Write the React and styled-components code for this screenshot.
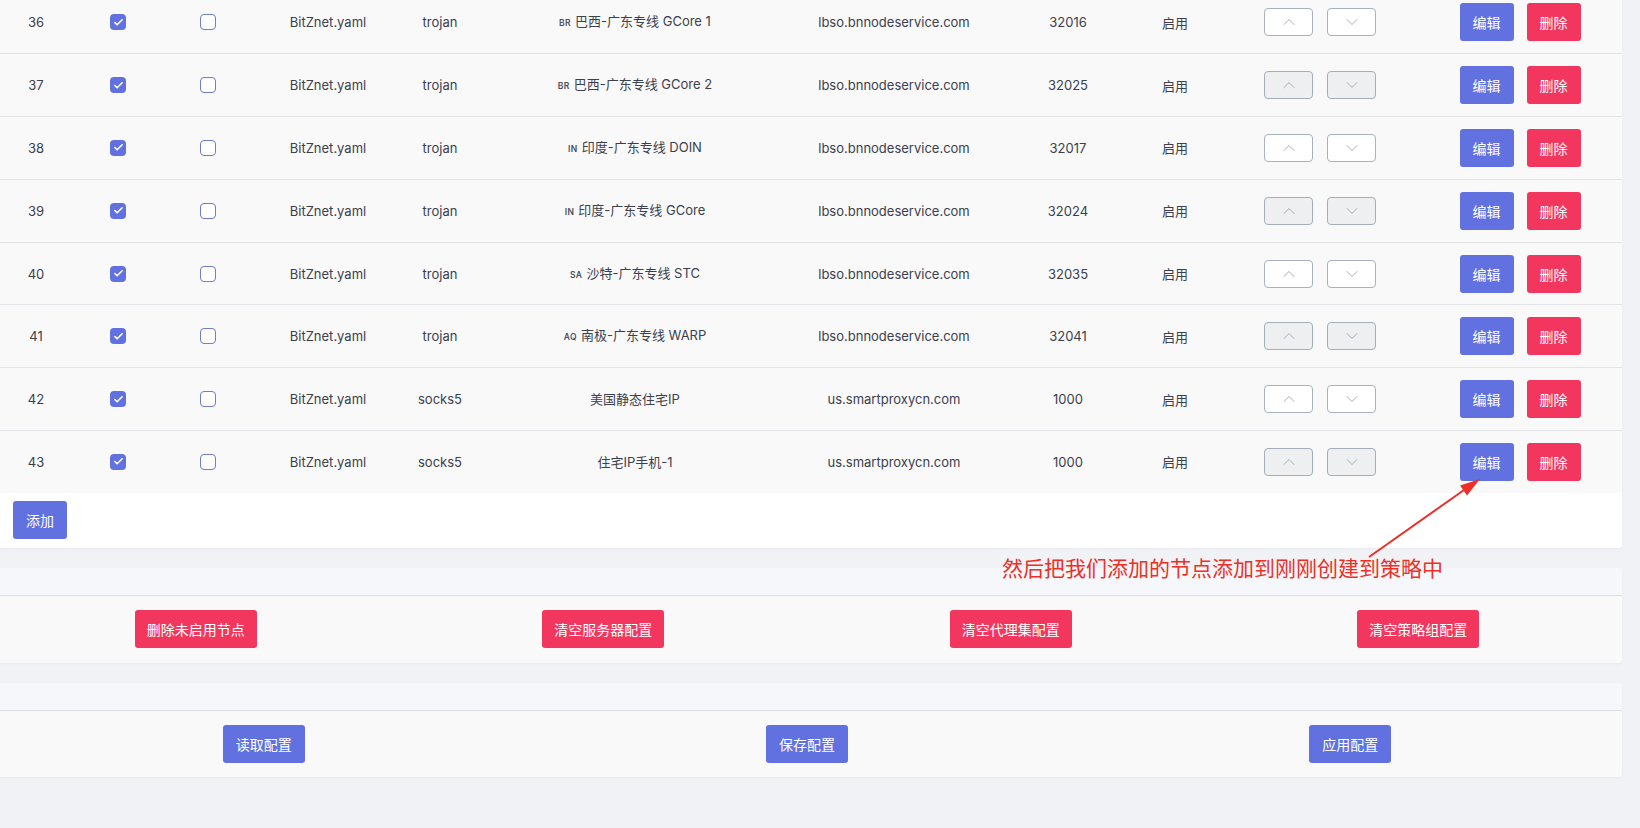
import React from "react";
import styled, { createGlobalStyle } from "styled-components";
import { ChevronUp, ChevronDown, Check } from "lucide-react";

const GlobalStyle = createGlobalStyle`
    html, body {
        margin: 0;
        padding: 0;
        background: #f1f2f5;
        overflow: hidden;
    }
    body {
        font-family: Inter, "Noto Sans CJK SC", sans-serif;
        color: #3b404c;
    }
`;

const COLUMNS = "88px 76px 104px 136px 88px 302px 216px 132px 82px 208px 198px";

const rows = [
    {id: 36, type: "trojan", flag: "BR", name: "巴西-广东专线 GCore 1", server: "lbso.bnnodeservice.com", port: 32016},
    {id: 37, type: "trojan", flag: "BR", name: "巴西-广东专线 GCore 2", server: "lbso.bnnodeservice.com", port: 32025},
    {id: 38, type: "trojan", flag: "IN", name: "印度-广东专线 DOIN", server: "lbso.bnnodeservice.com", port: 32017},
    {id: 39, type: "trojan", flag: "IN", name: "印度-广东专线 GCore", server: "lbso.bnnodeservice.com", port: 32024},
    {id: 40, type: "trojan", flag: "SA", name: "沙特-广东专线 STC", server: "lbso.bnnodeservice.com", port: 32035},
    {id: 41, type: "trojan", flag: "AQ", name: "南极-广东专线 WARP", server: "lbso.bnnodeservice.com", port: 32041},
    {id: 42, type: "socks5", flag: null, name: "美国静态住宅IP", server: "us.smartproxycn.com", port: 1000},
    {id: 43, type: "socks5", flag: null, name: "住宅IP手机-1", server: "us.smartproxycn.com", port: 1000},
];

const Root = styled.div`
    position: relative;
    width: 1640px;
    height: 828px;
    overflow: hidden;
`;

const Page = styled.div`
    width: 1630px;
    margin: -9.5px 0 0 -8px;
    display: flex;
    flex-direction: column;
    gap: 20px;
`;

const Panel = styled.div`
    background: #ffffff;
    border-radius: 0 0 4px 4px;
    box-shadow: 0 1px 3px rgba(20, 30, 60, 0.04);
    overflow: hidden;
`;

const Row = styled.div`
    display: grid;
    grid-template-columns: ${COLUMNS};
    height: 61.8px;
    border-top: 1px solid #e1e3e7;
    background: #f9f9fa;
    font-size: 13px;
`;

const Cell = styled.div`
    display: flex;
    align-items: center;
    justify-content: center;
    gap: ${props => props.$gap || 0}px;
    padding-right: ${props => props.$pr || 0}px;
    white-space: nowrap;
`;

const Name = styled.span`
    line-height: 20px;
`;

const Flag = styled.span`
    font-size: 8.5px;
    font-weight: 600;
    letter-spacing: 0.4px;
    color: #4a4f5c;
    margin-right: 4px;
`;

const Box = styled.span`
    width: 16px;
    height: 16px;
    box-sizing: border-box;
    border-radius: 4px;
    display: flex;
    align-items: center;
    justify-content: center;
    background: ${props => props.$checked ? "#6172e0" : "#ffffff"};
    border: ${props => props.$checked ? "none" : "1.5px solid #6f7cc6"};
`;

const MoveButton = styled.button`
    width: 49px;
    height: 28px;
    box-sizing: border-box;
    padding: 0;
    border: 1px solid ${props => props.$muted ? "#a5adbb" : "#a9b1be"};
    border-radius: 4px;
    background: ${props => props.$muted ? "#eeeff1" : "#ffffff"};
    display: flex;
    align-items: center;
    justify-content: center;
    color: #a8adb6;
`;

const Button = styled.button`
    height: 38px;
    padding: 0 ${props => props.$px || 13}px;
    border: none;
    border-radius: 3px;
    background: ${props => props.$danger ? "#f3365d" : "#6172e0"};
    color: #ffffff;
    font-family: "Noto Sans CJK SC", sans-serif;
    font-size: 14px;
    white-space: nowrap;
`;

const AddBar = styled.div`
    height: 55px;
    padding: 8px 0 0 21px;
    box-sizing: border-box;
    background: #ffffff;
`;

const Section = styled.div`
    background: #f9f9fa;
    border-radius: 4px;
    box-shadow: 0 1px 3px rgba(20, 30, 60, 0.04);
    overflow: hidden;
`;

const SectionHead = styled.div`
    height: ${props => props.$h}px;
    background: #f5f7fa;
    border-bottom: 1px solid #dcdfe4;
`;

const SectionBody = styled.div`
    display: grid;
    grid-template-columns: repeat(${props => props.$cols}, 1fr);
    justify-items: center;
    align-items: center;
    height: ${props => props.$h}px;
`;

const Note = styled.div`
    position: absolute;
    left: 1002px;
    top: 553px;
    font-family: "Noto Sans CJK SC", sans-serif;
    font-size: 21px;
    line-height: 28px;
    color: #ee2f28;
    white-space: nowrap;
`;

const Arrow = styled.svg`
    position: absolute;
    left: 0;
    top: 0;
    pointer-events: none;
`;

function CheckBox({checked}) {
    return (
        <Box $checked={checked}>
            {checked && <Check size={11} color="#fff" strokeWidth={3.5} />}
        </Box>
    );
}

function NodeRow({row, index}) {
    const muted = index % 2 === 1;
    return (
        <Row>
            <Cell>{row.id}</Cell>
            <Cell><CheckBox checked /></Cell>
            <Cell><CheckBox /></Cell>
            <Cell>BitZnet.yaml</Cell>
            <Cell>{row.type}</Cell>
            <Cell>
                <Name>{row.flag && <Flag>{row.flag}</Flag>}{row.name}</Name>
            </Cell>
            <Cell>{row.server}</Cell>
            <Cell>{row.port}</Cell>
            <Cell>启用</Cell>
            <Cell $gap={14}>
                <MoveButton $muted={muted}><ChevronUp size={20} strokeWidth={1.2} /></MoveButton>
                <MoveButton $muted={muted}><ChevronDown size={20} strokeWidth={1.2} /></MoveButton>
            </Cell>
            <Cell $gap={13} $pr={6}>
                <Button $px={13}>编辑</Button>
                <Button $px={13} $danger>删除</Button>
            </Cell>
        </Row>
    );
}

export default function App() {
    return (
        <Root>
            <GlobalStyle />
            <Page>
                <Panel>
                    {rows.map((row, index) => <NodeRow key={row.id} row={row} index={index} />)}
                    <AddBar>
                        <Button>添加</Button>
                    </AddBar>
                </Panel>

                <Section>
                    <SectionHead $h={27} />
                    <SectionBody $cols={4} $h={67}>
                        <Button $danger $px={12}>删除未启用节点</Button>
                        <Button $danger $px={12}>清空服务器配置</Button>
                        <Button $danger $px={12}>清空代理集配置</Button>
                        <Button $danger $px={12}>清空策略组配置</Button>
                    </SectionBody>
                </Section>

                <Section>
                    <SectionHead $h={27} />
                    <SectionBody $cols={3} $h={66}>
                        <Button $px={13}>读取配置</Button>
                        <Button $px={13}>保存配置</Button>
                        <Button $px={13}>应用配置</Button>
                    </SectionBody>
                </Section>
            </Page>

            <Arrow width="1640" height="828" viewBox="0 0 1640 828">
                <line x1="1369" y1="557" x2="1464" y2="490" stroke="#ee2f28" strokeWidth="2" />
                <polygon points="1480,479 1467,495.4 1460.1,485.6" fill="#ee2f28" />
            </Arrow>
            <Note>然后把我们添加的节点添加到刚刚创建到策略中</Note>
        </Root>
    );
}
